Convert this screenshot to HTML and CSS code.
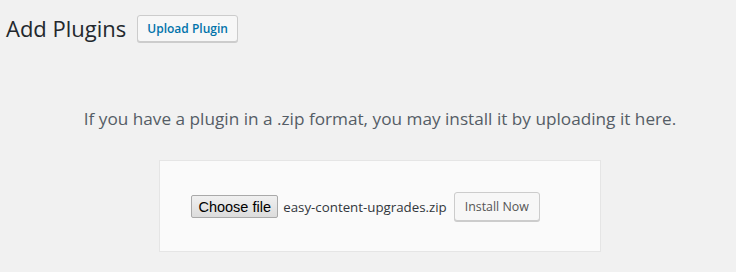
FILE: index.html
```html
<!DOCTYPE html>
<html lang="en">
<head>
  <meta charset="UTF-8">
  <title>Add Plugins</title>
  <link rel="stylesheet" href="styles.css">
</head>
<body>
  <div class="wrap">
    <div class="page-head">
      <h1>Add Plugins</h1>
      <button class="upload-btn">Upload Plugin</button>
    </div>

    <div class="upload-plugin">
      <p class="install-help">If you have a plugin in a .zip format, you may install it by uploading it here.</p>
      <form class="upload-form">
        <span class="file-input">
          <button type="button" class="choose-btn">Choose file</button>
          <span class="file-name">easy-content-upgrades.zip</span>
        </span>
        <button type="button" class="install-btn">Install Now</button>
      </form>
    </div>
  </div>
</body>
</html>
```

FILE: styles.css
```css
body {
  margin: 0;
  background: #f1f1f1;
  font-family: "Open Sans", sans-serif;
  color: #23282d;
}
.wrap {
  padding-left: 6px;
}
.page-head {
  display: flex;
  align-items: center;
  gap: 11px;
  padding-top: 13px;
}
.page-head h1 {
  margin: 0;
  font-size: 22px;
  font-weight: 400;
  color: #23282d;
}
.upload-btn {
  height: 27px;
  padding: 0 9px;
  font-family: "Open Sans", sans-serif;
  font-size: 12px;
  font-weight: 600;
  color: #0073aa;
  background: #f7f7f7;
  border: 1px solid #ccc;
  border-radius: 3px;
  box-shadow: 0 1px 0 #ccc;
}
.upload-plugin {
  padding-left: 18px;
  text-align: center;
}
.install-help {
  margin: 0;
  padding: 64px 0 30px;
  font-size: 17.2px;
  color: #555d66;
}
.upload-form {
  display: inline-flex;
  align-items: center;
  gap: 7px;
  padding: 31px 60px 30px 31px;
  background: #fafafa;
  border: 1px solid #e5e5e5;
}
.file-input {
  display: flex;
  align-items: center;
  gap: 5px;
}
.choose-btn {
  width: 87px;
  height: 23px;
  padding: 0;
  font-family: "Liberation Sans", Arial, sans-serif;
  font-size: 14.5px;
  color: #000;
  background: linear-gradient(#f0f0f0, #dcdcdc);
  border: 1px solid #a9a9a9;
  border-radius: 2px;
}
.file-name {
  font-size: 13.3px;
  color: #32373c;
}
.install-btn {
  width: 86px;
  height: 29px;
  padding: 0;
  font-family: "Open Sans", sans-serif;
  font-size: 12.4px;
  color: #555;
  background: #f7f7f7;
  border: 1px solid #ccc;
  border-radius: 3px;
  box-shadow: 0 1px 0 #ccc;
}
```
